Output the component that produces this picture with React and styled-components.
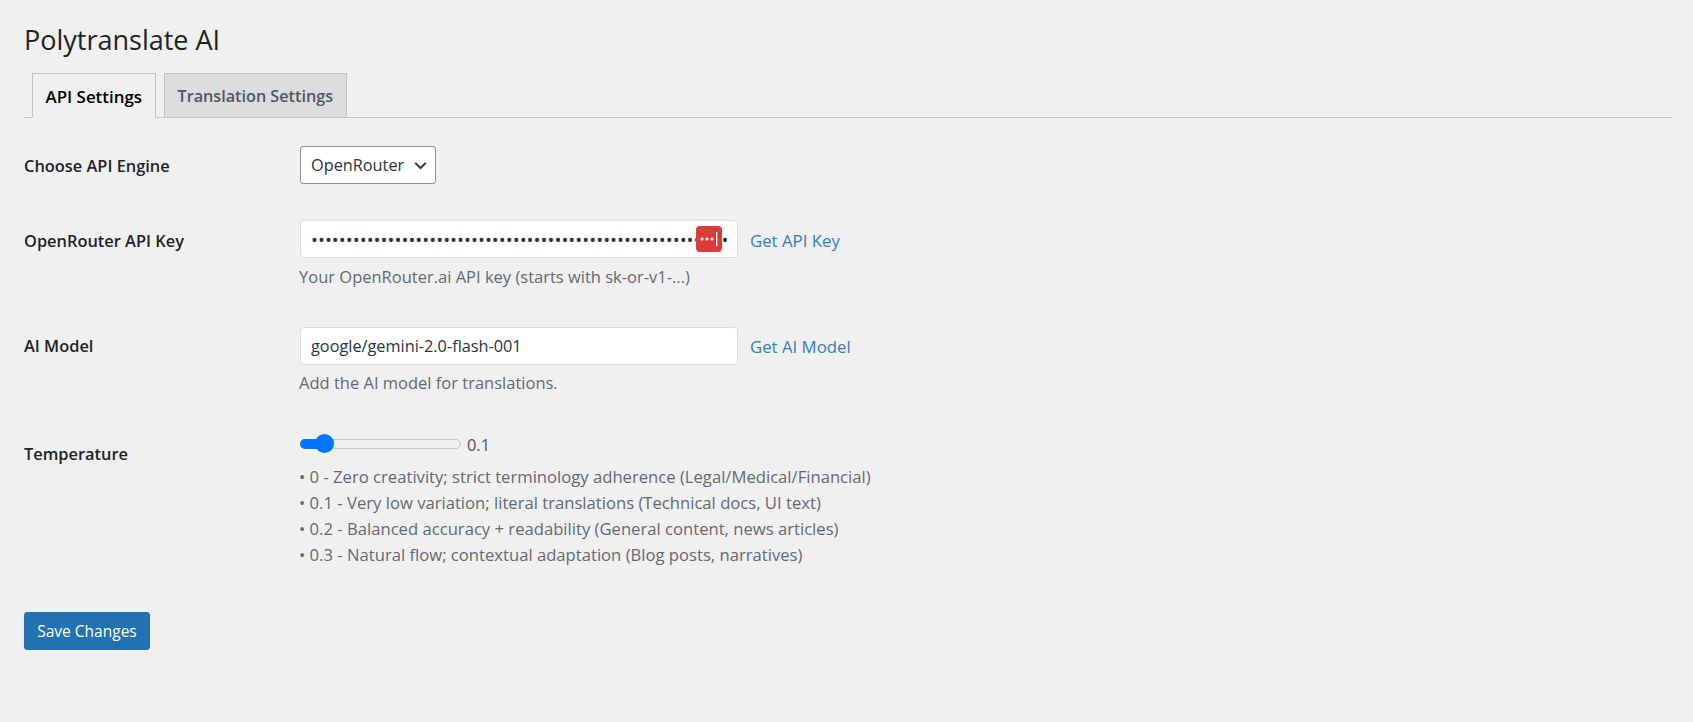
import React from "react";
import styled, { createGlobalStyle } from "styled-components";

const Global = createGlobalStyle`
  html, body { margin: 0; padding: 0; background: #f0f0f1; }
  body { font-family: "Open Sans", "Noto Sans", sans-serif; font-size: 16px; color: #3c434a; }
  * { box-sizing: border-box; }
`;

const Page = styled.div`
  padding: 20px 21px 0 24px;
  height: 722px;
  overflow: hidden;
`;
const Title = styled.h1`
  margin: 0;
  font-size: 27px;
  font-weight: 400;
  line-height: 40px;
  color: #1d2327;
`;
const TabBar = styled.nav`
  display: flex;
  gap: 8px;
  margin-top: 13px;
  padding-left: 8px;
  height: 45px;
  border-bottom: 1px solid #c3c4c7;
`;
const Tab = styled.a`
  display: block;
  height: 45px;
  padding: 0 ${p => (p.$active ? "12.5px" : "13px")};
  line-height: 45px;
  font-size: ${p => (p.$active ? "16.9px" : "16.2px")};
  font-weight: 600;
  border: 1px solid #c3c4c7;
  border-bottom-color: ${p => (p.$active ? "#f0f0f1" : "#c3c4c7")};
  background: ${p => (p.$active ? "#f0f0f1" : "#dcdcde")};
  color: ${p => (p.$active ? "#000" : "#50575e")};
`;
const Form = styled.div`
  display: flex;
  flex-direction: column;
  margin-top: 28px;
`;
const Row = styled.div`
  display: grid;
  grid-template-columns: 276px 1fr;
  margin-bottom: ${p => p.$gap}px;
`;
const Label = styled.div`
  font-size: 16.4px;
  font-weight: 600;
  color: #1d2327;
  line-height: 20px;
  padding-top: ${p => p.$top}px;
`;
const Field = styled.div`
  display: flex;
  flex-direction: column;
`;
const SelectBox = styled.div`
  display: flex;
  align-items: center;
  justify-content: space-between;
  width: 136px;
  height: 38px;
  padding: 0 7px 0 10px;
  background: #fff;
  border: 1px solid #8c8f94;
  border-radius: 3px;
  font-size: 16.3px;
  color: #2c3338;
`;
const InputLine = styled.div`
  display: flex;
  align-items: center;
  gap: 12px;
`;
const InputWrap = styled.div`
  position: relative;
  width: 438px;
`;
const TextInput = styled.input`
  display: block;
  width: 100%;
  height: 38px;
  padding: 0 10px;
  background: #fff;
  border: 1px solid #dcdcde;
  border-radius: 4px;
  font-family: inherit;
  font-size: ${p => (p.type === "password" ? "18.5px" : "16.3px")};
  color: #2c3338;
  outline: none;
`;
const PassBadge = styled.span`
  position: absolute;
  top: 6px;
  right: 16px;
  width: 26px;
  height: 26px;
  display: block;
`;
const DocLink = styled.a`
  font-size: 16.8px;
  color: #2271b1;
  line-height: 24px;
  padding-top: ${p => p.$top}px;
  text-decoration: none;
  opacity: .9;
`;
const Desc = styled.p`
  margin: ${p => p.$top}px 0 0 -1px;
  font-size: 16.5px;
  line-height: 20px;
  color: #646970;
`;
const SliderLine = styled.div`
  display: flex;
  align-items: center;
  gap: 6px;
  height: 22px;
  font-size: 16.4px;
  color: #50575e;
`;
const Track = styled.div`
  position: relative;
  width: 161px;
  height: 10px;
  border: 1px solid #c4c4c4;
  border-radius: 5px;
  background: #efefef;
`;
const Fill = styled.div`
  position: absolute;
  left: -1px;
  top: -1px;
  height: 10px;
  width: 24px;
  border-radius: 5px 0 0 5px;
  background: #0075ff;
`;
const Thumb = styled.div`
  position: absolute;
  left: 14px;
  top: -6px;
  width: 19px;
  height: 19px;
  border-radius: 50%;
  background: #0075ff;
`;
const Notes = styled.div`
  margin: 9px 0 0 -1px;
  font-size: 16.65px;
  line-height: 26px;
  color: #646970;
`;
const Save = styled.button`
  display: block;
  width: 126px;
  height: 38px;
  padding: 0;
  background: #2271b1;
  border: 1px solid #2271b1;
  border-radius: 3px;
  color: #fff;
  font-family: inherit;
  font-size: 15.5px;
`;

const Chevron = () => (
  <svg width="15" height="15" viewBox="0 0 20 20" fill="none">
    <path d="M3 6.5 10 13.5 17 6.5" stroke="#2c3338" strokeWidth="2.8" />
  </svg>
);

const Badge = () => (
  <PassBadge>
    <svg width="26" height="26" viewBox="0 0 26 26">
      <rect width="26" height="26" rx="4" fill="#dd3b39" />
      <circle cx="6" cy="13" r="1.6" fill="#fff" />
      <circle cx="11" cy="13" r="1.6" fill="#fff" />
      <circle cx="16" cy="13" r="1.6" fill="#fff" />
      <rect x="20" y="6" width="1.3" height="14" fill="#fff" />
    </svg>
  </PassBadge>
);

export default function App() {
  return (
    <>
      <Global />
      <Page>
        <Title>Polytranslate AI</Title>
        <TabBar>
          <Tab $active>API Settings</Tab>
          <Tab>Translation Settings</Tab>
        </TabBar>
        <Form>
          <Row $gap={36}>
            <Label $top={10}>Choose API Engine</Label>
            <Field>
              <SelectBox>OpenRouter <Chevron /></SelectBox>
            </Field>
          </Row>
          <Row $gap={40}>
            <Label $top={11}>OpenRouter API Key</Label>
            <Field>
              <InputLine>
                <InputWrap>
                  <TextInput type="password" readOnly value={"x".repeat(80)} />
                  <Badge />
                </InputWrap>
                <DocLink $top={4}>Get API Key</DocLink>
              </InputLine>
              <Desc $top={9}>Your OpenRouter.ai API key (starts with sk-or-v1-...)</Desc>
            </Field>
          </Row>
          <Row $gap={40}>
            <Label $top={9}>AI Model</Label>
            <Field>
              <InputLine>
                <InputWrap>
                  <TextInput readOnly value="google/gemini-2.0-flash-001" />
                </InputWrap>
                <DocLink $top={2}>Get AI Model</DocLink>
              </InputLine>
              <Desc $top={8}>Add the AI model for translations.</Desc>
            </Field>
          </Row>
          <Row $gap={44}>
            <Label $top={11}>Temperature</Label>
            <Field>
              <SliderLine>
                <Track><Fill /><Thumb /></Track>
                <span>0.1</span>
              </SliderLine>
              <Notes>
                <div>• 0 - Zero creativity; strict terminology adherence (Legal/Medical/Financial)</div>
                <div>• 0.1 - Very low variation; literal translations (Technical docs, UI text)</div>
                <div>• 0.2 - Balanced accuracy + readability (General content, news articles)</div>
                <div>• 0.3 - Natural flow; contextual adaptation (Blog posts, narratives)</div>
              </Notes>
            </Field>
          </Row>
          <Save>Save Changes</Save>
        </Form>
      </Page>
    </>
  );
}
